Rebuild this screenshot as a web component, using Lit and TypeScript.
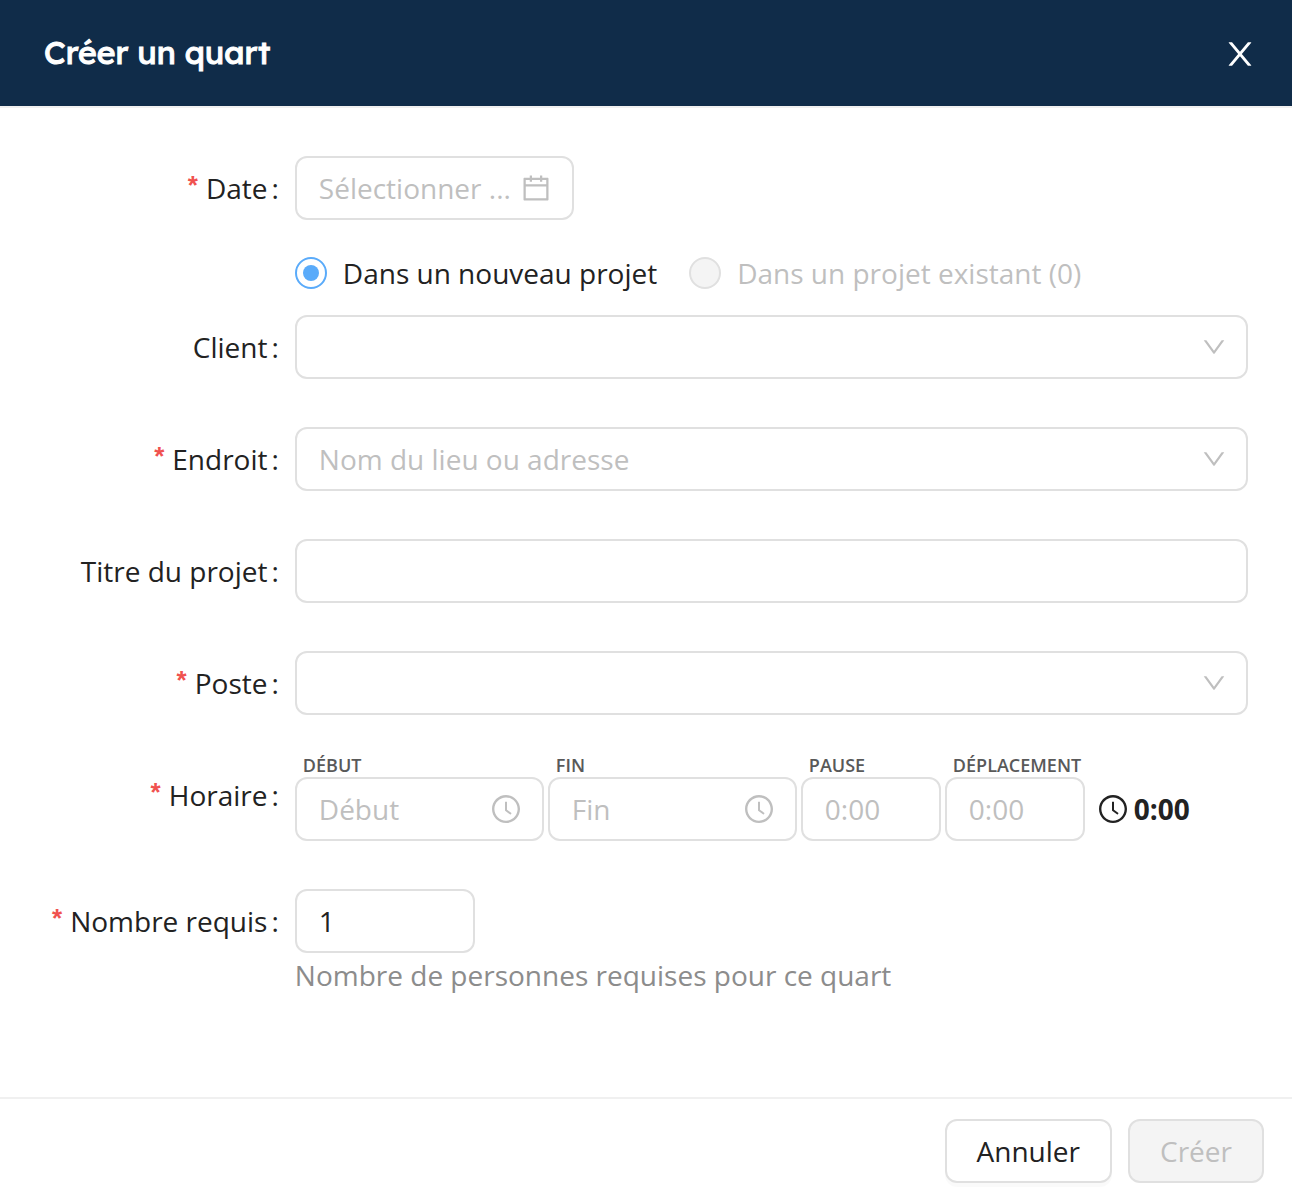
import { LitElement, html, css, svg, nothing } from "lit";
import type { TemplateResult } from "lit";
import { customElement, property, state } from "lit/decorators.js";
import { classMap } from "lit/directives/class-map.js";

const ICONS = {
  close: svg`<path d="M563.8 512l262.5-312.9c4.4-5.2.7-13.1-6.1-13.1h-79.8c-4.7 0-9.2 2.1-12.3 5.7L511.6 449.8 295.1 191.7c-3-3.6-7.5-5.7-12.3-5.7H203c-6.8 0-10.5 7.9-6.1 13.1L459.4 512 196.9 824.9A7.95 7.95 0 00203 838h79.8c4.7 0 9.2-2.1 12.3-5.7l216.5-258.1 216.5 258.1c3 3.6 7.5 5.7 12.3 5.7h79.8c6.8 0 10.5-7.9 6.1-13.1L563.8 512z"/>`,
  down: svg`<path d="M884 256h-75c-5.1 0-9.9 2.5-12.9 6.6L512 654.2 227.9 262.6c-3-4.1-7.8-6.6-12.9-6.6h-75c-6.5 0-10.3 7.4-6.5 12.7l352.6 486.1c12.8 17.6 39 17.6 51.7 0l352.6-486.1c3.9-5.3.1-12.7-6.4-12.7z"/>`,
  calendar: svg`<path d="M880 184H712v-64c0-4.4-3.6-8-8-8h-56c-4.4 0-8 3.6-8 8v64H384v-64c0-4.4-3.6-8-8-8h-56c-4.4 0-8 3.6-8 8v64H144c-17.7 0-32 14.3-32 32v664c0 17.7 14.3 32 32 32h736c17.7 0 32-14.3 32-32V216c0-17.7-14.3-32-32-32zm-40 656H184V460h656v380zM184 392V256h128v48c0 4.4 3.6 8 8 8h56c4.4 0 8-3.6 8-8v-48h256v48c0 4.4 3.6 8 8 8h56c4.4 0 8-3.6 8-8v-48h128v136H184z"/>`,
  clock: svg`<path d="M512 64C264.6 64 64 264.6 64 512s200.6 448 448 448 448-200.6 448-448S759.4 64 512 64zm0 820c-205.4 0-372-166.6-372-372s166.6-372 372-372 372 166.6 372 372-166.6 372-372 372z"/><path d="M686.7 638.6L544.1 535.5V288c0-4.4-3.6-8-8-8H488c-4.4 0-8 3.6-8 8v275.4c0 2.6 1.2 5 3.3 6.5l165.4 120.6c3.6 2.6 8.6 1.9 11.2-1.7l28.6-39c2.6-3.7 1.8-8.7-1.8-11.2z"/>`,
};

@customElement("ui-icon")
export class UiIcon extends LitElement {
  @property() name: keyof typeof ICONS = "close";

  static styles = css`
    :host {
      display: block;
      flex: none;
      width: 28px;
      height: 28px;
    }
    .glyph {
      display: block;
      width: 100%;
      height: 100%;
      fill: currentColor;
    }
  `;

  render() {
    return html`<svg class="glyph" viewBox="64 64 896 896" aria-hidden="true">
      ${ICONS[this.name]}
    </svg>`;
  }
}

interface TimeField {
  id: string;
  label: string;
  placeholder: string;
  clock: boolean;
}

const TIME_FIELDS: TimeField[] = [
  { id: "debut", label: "DÉBUT", placeholder: "Début", clock: true },
  { id: "fin", label: "FIN", placeholder: "Fin", clock: true },
  { id: "pause", label: "PAUSE", placeholder: "0:00", clock: false },
  { id: "deplacement", label: "DÉPLACEMENT", placeholder: "0:00", clock: false },
];

@customElement("app-root")
export class AppRoot extends LitElement {
  @state() private project: "new" | "existing" = "new";

  static styles = css`
    :host {
      display: flex;
      flex-direction: column;
      min-height: 100vh;
      background: #fff;
      color: #222;
      font: 400 28px/44px "Open Sans", "Noto Sans", sans-serif;
    }
    * {
      box-sizing: border-box;
    }
    .header {
      display: flex;
      align-items: center;
      justify-content: space-between;
      padding: 30px 36px 30px 44px;
      background: #102c49;
      color: #fff;
      border-bottom: 2px solid #f0f0f0;
    }
    .title {
      margin: 0;
      padding-bottom: 2px;
      font: 400 32px/44px Lexend, Inter, "Noto Sans", sans-serif;
      -webkit-text-stroke: 1px currentColor;
    }
    .close {
      padding: 2px 0 0;
      border: 0;
      background: none;
      color: inherit;
      cursor: pointer;
    }
    .close ui-icon {
      width: 32px;
      height: 32px;
    }
    .form {
      flex: 1;
      display: flex;
      flex-direction: column;
      gap: 48px;
      padding: 48px 44px;
    }
    .group {
      display: flex;
      flex-direction: column;
      gap: 20px;
    }
    .row {
      display: grid;
      grid-template-columns: 5fr 19fr;
      align-items: start;
    }
    .label {
      display: flex;
      align-items: center;
      justify-content: flex-end;
      height: 64px;
      padding-right: 16px;
      white-space: nowrap;
    }
    .required::before {
      content: "*";
      margin-right: 8px;
      color: #f0524f;
      font-family: "Liberation Sans", sans-serif;
      font-size: 26px;
      font-weight: 700;
      line-height: 38px;
      height: 44px;
    }
    .label::after {
      content: ":";
      margin-left: 4px;
    }
    .content {
      grid-column: 2;
      min-width: 0;
    }
    .box {
      display: flex;
      align-items: center;
      gap: 8px;
      height: 64px;
      padding: 0 22px;
      border: 2px solid #e0e0e0;
      border-radius: 12px;
      background: #fff;
      color: #bfbfbf;
    }
    .box:focus-within {
      border-color: #5aabfa;
    }
    .dropdown {
      padding-right: 20px;
    }
    .date {
      width: 279px;
    }
    .count {
      width: 180px;
    }
    .input {
      flex: 1;
      min-width: 0;
      width: 100%;
      height: 44px;
      padding: 0;
      border: 0;
      outline: 0;
      background: none;
      color: #222;
      font: inherit;
      appearance: textfield;
    }
    .input::placeholder {
      color: #bfbfbf;
      opacity: 1;
    }
    .input::-webkit-inner-spin-button {
      display: none;
    }
    .select {
      appearance: none;
    }
    .empty {
      color: #bfbfbf;
    }
    .chevron {
      width: 24px;
      height: 24px;
    }
    .radios {
      display: flex;
      flex-wrap: wrap;
      gap: 32px;
      padding-top: 11px;
    }
    .choice {
      display: flex;
      align-items: center;
      gap: 16px;
    }
    .off {
      color: #bfbfbf;
    }
    .radio {
      appearance: none;
      flex: none;
      display: grid;
      place-items: center;
      width: 32px;
      height: 32px;
      margin: 0;
      border: 2px solid #e0e0e0;
      border-radius: 50%;
      background: #fff;
    }
    .radio:checked {
      border-color: #5aabfa;
    }
    .radio:checked::before {
      content: "";
      width: 16px;
      height: 16px;
      border-radius: 50%;
      background: #5aabfa;
    }
    .radio:disabled {
      background: #f4f4f4;
    }
    .times {
      display: flex;
      align-items: flex-end;
      gap: 4px;
    }
    .time {
      display: flex;
      flex-direction: column;
      width: 140px;
    }
    .wide {
      width: 249px;
    }
    .caption {
      height: 14px;
      padding-left: 8px;
      color: #595959;
      font-size: 18px;
      font-weight: 600;
      line-height: 4px;
    }
    .total {
      display: flex;
      align-items: center;
      gap: 7px;
      height: 64px;
      margin-left: 10px;
      font-weight: 700;
    }
    .help {
      margin: 0;
      color: #8c8c8c;
    }
    .footer {
      display: flex;
      justify-content: flex-end;
      gap: 16px;
      padding: 20px 28px 19px;
      border-top: 2px solid #f0f0f0;
    }
    .button {
      height: 64px;
      padding: 0 30px;
      border: 2px solid #e0e0e0;
      border-radius: 12px;
      background: #fff;
      box-shadow: 0 4px 0 rgba(0, 0, 0, 0.02);
      color: #222;
      font: inherit;
      cursor: pointer;
    }
    .button:disabled {
      background: #f4f4f4;
      box-shadow: none;
      color: #bfbfbf;
      cursor: not-allowed;
    }
  `;

  private row(id: string, label: string, required: boolean, content: TemplateResult) {
    return html`<div class="row">
      <label class=${classMap({ label: true, required })} for=${id}>${label}</label>
      <div class="content">${content}</div>
    </div>`;
  }

  private select(id: string, placeholder = "") {
    return html`<div class="box dropdown">
      <select class="input select empty" id=${id}>
        <option value="">${placeholder}</option>
      </select>
      <ui-icon class="chevron" name="down"></ui-icon>
    </div>`;
  }

  private time(field: TimeField) {
    return html`<div class=${classMap({ time: true, wide: field.clock })}>
      <label class="caption" for=${field.id}>${field.label}</label>
      <div class="box">
        <input class="input" id=${field.id} placeholder=${field.placeholder} />
        ${field.clock ? html`<ui-icon name="clock"></ui-icon>` : nothing}
      </div>
    </div>`;
  }

  render() {
    return html`
      <header class="header">
        <h1 class="title">Créer un quart</h1>
        <button class="close" type="button" aria-label="Fermer">
          <ui-icon name="close"></ui-icon>
        </button>
      </header>
      <form class="form" id="shift">
        <div class="group">
          ${this.row(
            "date",
            "Date",
            true,
            html`<div class="box date">
              <input class="input" id="date" placeholder="Sélectionner ..." />
              <ui-icon name="calendar"></ui-icon>
            </div>`
          )}
          <div class="row">
            <div class="content radios">
              <label class="choice">
                <input
                  class="radio"
                  type="radio"
                  name="project"
                  .checked=${this.project === "new"}
                  @change=${() => (this.project = "new")}
                />
                Dans un nouveau projet
              </label>
              <label class="choice off">
                <input class="radio" type="radio" name="project" disabled />
                Dans un projet existant (0)
              </label>
            </div>
          </div>
          ${this.row("client", "Client", false, this.select("client"))}
        </div>
        ${this.row("endroit", "Endroit", true, this.select("endroit", "Nom du lieu ou adresse"))}
        ${this.row(
          "titre",
          "Titre du projet",
          false,
          html`<div class="box"><input class="input" id="titre" /></div>`
        )}
        ${this.row("poste", "Poste", true, this.select("poste"))}
        ${this.row(
          "debut",
          "Horaire",
          true,
          html`<div class="times">
            ${TIME_FIELDS.map((field) => this.time(field))}
            <div class="total"><ui-icon name="clock"></ui-icon>0:00</div>
          </div>`
        )}
        ${this.row(
          "nombre",
          "Nombre requis",
          true,
          html`<div class="box count">
              <input class="input" id="nombre" type="number" min="1" value="1" />
            </div>
            <p class="help">Nombre de personnes requises pour ce quart</p>`
        )}
      </form>
      <footer class="footer">
        <button class="button" type="button">Annuler</button>
        <button class="button" type="submit" form="shift" disabled>Créer</button>
      </footer>
    `;
  }
}
